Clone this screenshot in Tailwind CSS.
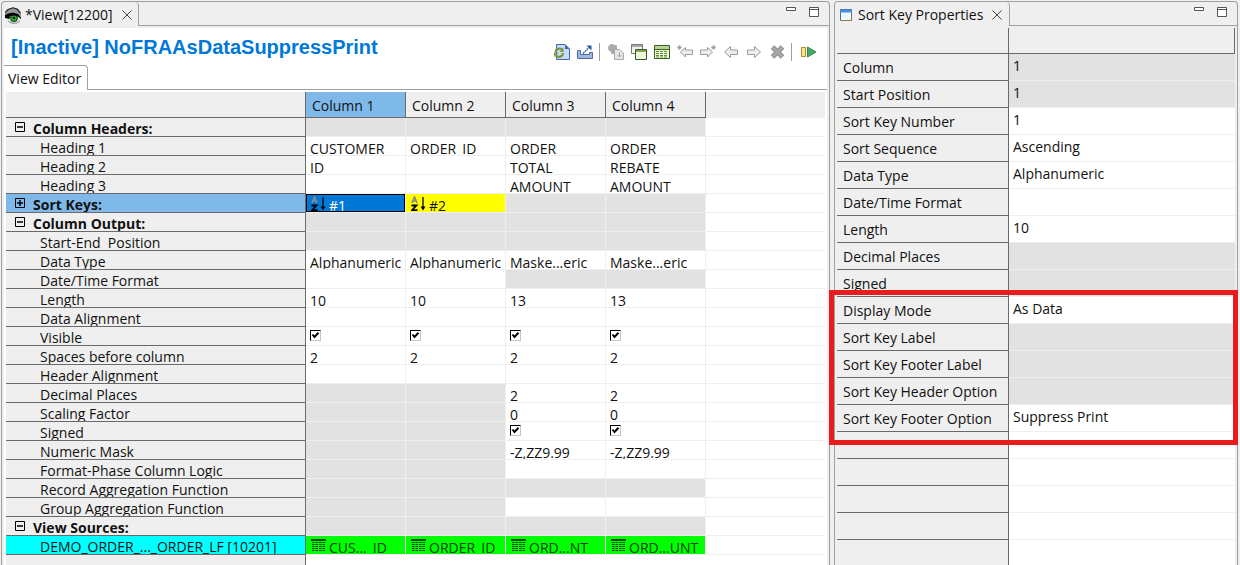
<!DOCTYPE html>
<html lang="en">
<head>
<meta charset="utf-8">
<title>View Editor</title>
<script src="https://cdn.jsdelivr.net/npm/@tailwindcss/browser@4"></script>
</head>
<body class="h-screen overflow-hidden bg-[#efefef] font-['Open_Sans','Noto_Sans',sans-serif] text-sm leading-5 text-[#111]">
<main class="flex h-full gap-1 pt-px pr-0.5 pl-px">

  <!-- View editor -->
  <section class="flex min-w-0 flex-1 flex-col overflow-hidden rounded-t border border-b-0 border-[#a0a0a0]">
    <header class="flex h-6 shrink-0">
      <div class="flex w-[137px] shrink-0 items-center rounded-tr border-r border-[#a0a0a0] pt-0.5 pl-[3px]">
        <svg class="h-[17px] w-4 shrink-0" viewBox="0 0 16 17" aria-hidden="true">
          <path d="M0 6 3 2.500 8 .5 13 2 16 6V10L12 7 7 5.500 3 7 0 10Z" fill="#9a9a9a"/>
          <path d="M0 5.500 3 2.500 8 .8 12 2 15.500 6" fill="none" stroke="#222" stroke-width="1.200"/>
          <path d="M0 8 4 6.500 8 6 13 7.500 16 10V13L12 16H6L3 13Z" fill="#e6e6e6"/>
          <circle cx="9" cy="11" r="3.900" fill="#0a4a0e"/><circle cx="9" cy="11.300" r="2.700" fill="#35b52d"/><circle cx="9" cy="11" r="1.300" fill="#012"/>
          <path d="M0 8 3 6.500 8 5.500 13 7 16 10.500V12L13 9.500 9 8.300 5 9 4.500 12 2 11.500 0 11Z" fill="#000"/>
          <path d="M3 14 7 16.300 12 16 15 14" fill="none" stroke="#888"/>
        </svg>
        <span class="ml-1 whitespace-nowrap">*View[12200]</span>
        <button class="ml-2 size-3 shrink-0" aria-label="Close view"><svg viewBox="0 0 12 12" fill="none" stroke="#444"><path d="M1.500 1.500 10.500 10.500M10.500 1.500 1.500 10.500"/></svg></button>
      </div>
      <div class="flex flex-1 items-start justify-end gap-[11px] border-b border-[#a0a0a0] pt-1 pr-[9px]">
        <button class="h-3 w-3" aria-label="Minimize"><svg viewBox="0 0 12 12" fill="#fff" stroke="#555"><path d="M1.500 1.500H10.500V4.500H1.500Z"/></svg></button>
        <button class="h-3 w-3" aria-label="Maximize"><svg viewBox="0 0 12 12" fill="#fff" stroke="#555"><path d="M1.500 1.500H10.500V10.500H1.500ZM1.500 3.500H10.500"/></svg></button>
      </div>
    </header>

    <div class="mt-0.5 mr-0.5 ml-0.5 flex min-h-0 flex-1 flex-col bg-white">
      <div class="flex h-[37px] shrink-0 justify-between pr-[10px] pl-[7px]">
        <h1 class="pt-[7px] font-['Liberation_Sans',sans-serif] text-[20px] leading-6 font-bold whitespace-nowrap text-[#0078d7]">[Inactive] NoFRAAsDataSuppressPrint</h1>
        <div class="flex gap-[7px] pt-4" role="toolbar" aria-label="View actions">
          <button class="size-4" aria-label="Refresh"><svg viewBox="0 0 16 16"><path d="M2.500.500H11L15.500 5V15.500H2.500Z" fill="#c9dcf5" stroke="#3f67b0"/><path d="M11 .500V5H15.500Z" fill="#3f67b0"/><path d="M1.500 8A4 4 0 0 1 8 5.500M9 9A4 4 0 0 1 2 11.500" fill="none" stroke="#7b9340" stroke-width="2.200"/><path d="M9.500 3.500V8H5.500ZM0 13V8.500H4.500Z" fill="#7b9340"/></svg></button>
          <button class="size-4" aria-label="Export"><svg viewBox="0 0 16 16"><path d="M.500 6.500H3.500V10.500H12.500V8.500H15.500V14.500H.500Z" fill="#9db7df" stroke="#4a6ca8"/><path d="M6 9.500 13 2.500" stroke="#205a96" stroke-width="1.300" stroke-dasharray="2 .7"/><path d="M9.500 1.500H14.500V6.500Z" fill="#205a96"/></svg></button>
          <span class="-mt-px mr-px -ml-px h-[18px] w-px bg-[#a0a0a0]"></span>
          <button class="size-4" aria-label="Copy"><svg viewBox="0 0 16 16" fill="#e4e4e4" stroke="#aaa"><circle cx="4" cy="4" r="3.500" fill="#aaa"/><path d="M3.500 1.500H8.500V9.500H3.500Z" fill="#aaa"/><path d="M6.500 5.500H11.500L15.500 9V15.500H6.500Z"/><path d="M11.500 8V13M9.500 11 11.500 13 13.500 11" fill="none"/></svg></button>
          <button class="size-4" aria-label="Windows"><svg viewBox="0 0 16 16"><path d="M.500.500H11.500V9.500H.500Z" fill="#f2f2f2" stroke="#777"/><path d="M1 2H11" stroke="#aaa" stroke-width="2"/><path d="M4.500 5.500H15.500V15.500H4.500Z" fill="#edf5da" stroke="#345b20"/><path d="M5 7H15" stroke="#80a850" stroke-width="2"/></svg></button>
          <button class="size-4" aria-label="Table"><svg viewBox="0 0 16 16"><path d="M.500 1.500H15.500V14.500H.500Z" fill="#f1fadd" stroke="#35651c"/><path d="M1 3.500H15" stroke="#b5d39a" stroke-width="3"/><path d="M.500 5.500H15.500" stroke="#35651c"/><path d="M2 7.500H14M2 9.500H14M2 11.500H14M2 13H14" stroke="#58902e" stroke-dasharray="3 1"/></svg></button>
          <button class="size-4" aria-label="Insert before"><svg viewBox="0 0 16 16" fill="#eee" stroke="#999"><path d="M3.500 8 8.500 3.500V6H15.500V10.500H8.500V13Z"/><path d="M2.500 1V6M0 3.500H5M.700 1.700 4.300 5.300M4.300 1.700.700 5.300" stroke-width=".8"/></svg></button>
          <button class="size-4" aria-label="Insert after"><svg viewBox="0 0 16 16" fill="#eee" stroke="#999"><path d="M12.500 8 7.500 3.500V6H.500V10.500H7.500V13Z"/><path d="M13.500 1V6M11 3.500H16M11.700 1.700 15.300 5.300M15.300 1.700 11.700 5.300" stroke-width=".8"/></svg></button>
          <button class="size-4" aria-label="Move left"><svg viewBox="0 0 16 16" fill="#eee" stroke="#999"><path d="M1.500 8 7.500 2.500V6H14.500V10.500H7.500V13.500Z"/></svg></button>
          <button class="size-4" aria-label="Move right"><svg viewBox="0 0 16 16" fill="#eee" stroke="#999"><path d="M14.500 8 8.500 2.500V6H1.500V10.500H8.500V13.500Z"/></svg></button>
          <button class="size-4" aria-label="Delete"><svg viewBox="0 0 16 16" fill="none"><path d="M3.500 3 13.500 13M13.500 3 3.500 13" stroke="#8f8f8f" stroke-width="5"/><path d="M3.500 3 13.500 13M13.500 3 3.500 13" stroke="#a8a8a8" stroke-width="3"/></svg></button>
          <span class="-mt-px mr-0.5 -ml-px h-[18px] w-px bg-[#a0a0a0]"></span>
          <button class="size-4" aria-label="Run"><svg viewBox="0 0 16 16"><path d="M.500 3.500H4.500V12.500H.500Z" fill="#fbe49a" stroke="#b68a20"/><path d="M6.500 3 15 8 6.500 13Z" fill="#46a868" stroke="#2f8a4c"/></svg></button>
        </div>
      </div>
      <div class="flex h-[25px] shrink-0">
        <button class="w-[84px] shrink-0 rounded-tr border-t border-r border-[#a0a0a0] pt-0.5 pl-1 text-left whitespace-nowrap">View Editor</button>
        <div class="flex-1 border-b border-[#a0a0a0]"></div>
      </div>

      <div class="mt-0.5 mr-0.5 ml-0.5 flex min-h-0 flex-1 flex-col overflow-hidden">
        <table class="w-full table-fixed border-separate border-spacing-0">
          <colgroup><col class="w-[300px]"><col class="w-[100px]"><col class="w-[100px]"><col class="w-[100px]"><col class="w-[100px]"><col></colgroup>
          <thead>
            <tr class="h-[26px] bg-[#efefef] text-left">
              <td class="border-r border-b border-[#6a6a6a] p-0"></td>
              <th scope="col" class="border-r border-b border-[#6a6a6a] bg-[#7fb9ea] p-0 pt-0.5 pl-1.5 font-normal">Column 1</th>
              <th scope="col" class="border-r border-b border-[#6a6a6a] p-0 pt-0.5 pl-1.5 font-normal">Column 2</th>
              <th scope="col" class="border-r border-b border-[#6a6a6a] p-0 pt-0.5 pl-1.5 font-normal">Column 3</th>
              <th scope="col" class="border-r border-b border-[#6a6a6a] p-0 pt-0.5 pl-1.5 font-normal">Column 4</th>
              <td class="p-0"></td>
            </tr>
          </thead>
          <tbody id="grid"></tbody>
        </table>
        <div class="w-[300px] flex-1 border-r border-[#6a6a6a] bg-[#efefef]"></div>
      </div>
    </div>
  </section>

  <!-- Sort key properties -->
  <section class="relative flex w-[404px] shrink-0 flex-col rounded-t border border-b-0 border-[#a0a0a0]">
    <header class="flex h-6 shrink-0">
      <div class="flex w-[175px] shrink-0 items-center rounded-tr border-r border-[#a0a0a0] pt-0.5 pl-[5px]">
        <svg class="size-3 shrink-0" viewBox="0 0 12 12" aria-hidden="true"><path d="M.500.500H11.500V11.500H.500Z" fill="#eef8ff" stroke="#8a7a4a"/><path d="M.500 11V.500H11.500V6" fill="none" stroke="#3a6ea5"/><path d="M0 2H12" stroke="#4a90d0" stroke-width="3"/></svg>
        <span class="ml-1.5 whitespace-nowrap">Sort Key Properties</span>
        <button class="ml-2 size-3 shrink-0" aria-label="Close properties"><svg viewBox="0 0 12 12" fill="none" stroke="#444"><path d="M1.500 1.500 10.500 10.500M10.500 1.500 1.500 10.500"/></svg></button>
      </div>
      <div class="flex flex-1 items-start justify-end gap-[11px] border-b border-[#a0a0a0] pt-1 pr-[9px]">
        <button class="h-3 w-3" aria-label="Minimize"><svg viewBox="0 0 12 12" fill="#fff" stroke="#555"><path d="M1.500 1.500H10.500V4.500H1.500Z"/></svg></button>
        <button class="h-3 w-3" aria-label="Maximize"><svg viewBox="0 0 12 12" fill="#fff" stroke="#555"><path d="M1.500 1.500H10.500V10.500H1.500ZM1.500 3.500H10.500"/></svg></button>
      </div>
    </header>
    <div class="mt-0.5 mr-0.5 ml-0.5 min-h-0 flex-1 overflow-hidden">
      <table class="w-full table-fixed border-separate border-spacing-0">
        <colgroup><col class="w-[172px]"><col></colgroup>
        <thead><tr class="h-[26px]"><td class="border-r border-b border-[#6a6a6a] p-0"></td><td class="border-r border-b border-[#6a6a6a] p-0"></td></tr></thead>
        <tbody id="props"></tbody>
      </table>
    </div>
    <div class="pointer-events-none absolute top-[288px] -right-px -left-1.5 h-[155px] border-5 border-[#e81c1c]"></div>
  </section>
</main>

<script>
  // Row: [kind, label, cell 1..4]; null marks a disabled cell.
  const N = null;
  const rows = [
    ['open', 'Column Headers:', N, N, N, N],
    ['item', 'Heading 1', 'CUSTOMER', 'ORDER_ID', 'ORDER', 'ORDER'],
    ['item', 'Heading 2', 'ID', '', 'TOTAL', 'REBATE'],
    ['item', 'Heading 3', '', '', 'AMOUNT', 'AMOUNT'],
    ['shut', 'Sort Keys:', 'sort:#1', 'sort:#2', N, N],
    ['open', 'Column Output:', N, N, N, N],
    ['item', 'Start-End  Position', N, N, N, N],
    ['item', 'Data Type', 'Alphanumeric', 'Alphanumeric', 'Maske...eric', 'Maske...eric'],
    ['item', 'Date/Time Format', '', '', N, N],
    ['item', 'Length', '10', '10', '13', '13'],
    ['item', 'Data Alignment', '', '', '', ''],
    ['item', 'Visible', 'check', 'check', 'check', 'check'],
    ['item', 'Spaces before column', '2', '2', '2', '2'],
    ['item', 'Header Alignment', '', '', '', ''],
    ['item', 'Decimal Places', N, N, '2', '2'],
    ['item', 'Scaling Factor', N, N, '0', '0'],
    ['item', 'Signed', N, N, 'check', 'check'],
    ['item', 'Numeric Mask', N, N, '-Z,ZZ9.99', '-Z,ZZ9.99'],
    ['item', 'Format-Phase Column Logic', N, N, '', ''],
    ['item', 'Record Aggregation Function', N, N, N, N],
    ['item', 'Group Aggregation Function', N, N, '', ''],
    ['open', 'View Sources:', N, N, N, N],
    ['source', 'DEMO_ORDER_..._ORDER_LF [10201]', 'src:CUS..._ID', 'src:ORDER_ID', 'src:ORD...NT', 'src:ORD...UNT'],
  ];
  const sortIcon = '<svg class="ml-px mt-0.5 h-4 w-[15px] shrink-0" viewBox="0 0 15 16" fill="none" aria-hidden="true"><path d="M1 7 3.500 1 6 7M2 5H5" stroke="#8a8a8a" stroke-width="1.700"/><path d="M.500 9.500H5.500L1 14.200H6.500" stroke="#000" stroke-width="1.800"/><path d="M12 1V13" stroke="#000" stroke-width="1.300"/><path d="M9.500 10.500H14.500L12 14.500Z" fill="#000"/></svg>';
  const tableIcon = '<svg class="ml-px mt-[3px] h-3 w-[15px] shrink-0" viewBox="0 0 15 12" stroke="#043804" aria-hidden="true"><path d="M0 1H15" stroke="#000" stroke-width="1.500"/><path d="M1 3.500H14M1 5.500H14M1 7.500H14M1 9.500H14M1 11.500H14" stroke-dasharray="2.500 1"/></svg>';
  const check = (row, col) => '<span class="mt-[3px] grid size-[11px]"><input type="checkbox" checked aria-label="' + row + ', column ' + col + '" class="col-start-1 row-start-1 size-[11px] appearance-none border border-t-black border-l-black border-r-[#c8c8b8] border-b-[#c8c8b8] bg-white"><svg class="pointer-events-none col-start-1 row-start-1 size-[11px]" viewBox="0 0 11 11" fill="none" stroke="#000" stroke-width="2"><path d="M2.500 4.500 4.500 7 8.500 2.800"/></svg></span>';
  const cell = (v, row, col) => {
    let bg = 'bg-white', body = '';
    if (v === null) bg = 'bg-[#e2e2e2]';
    else if (v === 'check') body = check(row, col);
    else if (v.startsWith('sort:')) {
      bg = col === 1 ? 'bg-[#0078d7] text-white outline outline-black -outline-offset-1' : 'bg-[#ffff00]';
      body = sortIcon + '<span class="ml-[3px] mt-0.5">' + v.slice(5) + '</span>';
    } else if (v.startsWith('src:')) {
      bg = 'bg-[#00ff00] text-[#043804]';
      body = tableIcon + '<span class="ml-[3px] mt-0.5">' + v.slice(4) + '</span>';
    } else body = '<span class="mt-0.5">' + v + '</span>';
    return '<td class="border-r border-b border-[#efefef] p-0"><div class="flex h-[18px] items-start overflow-hidden pl-1 whitespace-nowrap ' + bg + '">' + body + '</div></td>';
  };
  document.getElementById('grid').innerHTML = rows.map(([kind, label, ...cells]) => {
    const bg = kind === 'shut' ? 'bg-[#7fb9ea]' : kind === 'source' ? 'bg-[#00ffff]' : 'bg-[#efefef]';
    const group = kind === 'open' || kind === 'shut';
    const head = group
      ? '<button class="flex items-start pl-[9px] font-bold" aria-expanded="' + (kind === 'open') + '"><svg class="mt-1 size-[10px]" viewBox="0 0 10 10" fill="none" stroke="#000"><path d="M.500.500H9.500V9.500H.500Z"/><path stroke-width="1.500" d="' + (kind === 'open' ? 'M2 5H8' : 'M2 5H8M5 2V8') + '"/></svg><span class="mt-px ml-2">' + label + '</span></button>'
      : '<span class="mt-px pl-[34px]">' + label + '</span>';
    return '<tr><th scope="row" class="border-r border-b border-[#6a6a6a] p-0 text-left font-normal ' + bg + '"><div class="flex h-[18px] items-start overflow-hidden whitespace-pre">' + head + '</div></th>' +
      cells.map((v, i) => cell(v, label, i + 1)).join('') + '<td class="border-b border-[#efefef] p-0"></td></tr>';
  }).join('');

  const props = [
    ['Column', '1', 0], ['Start Position', '1', 0], ['Sort Key Number', '1', 1], ['Sort Sequence', 'Ascending', 1],
    ['Data Type', 'Alphanumeric', 1], ['Date/Time Format', '', 1], ['Length', '10', 1], ['Decimal Places', '', 0],
    ['Signed', '', 0], ['Display Mode', 'As Data', 1], ['Sort Key Label', '', 0], ['Sort Key Footer Label', '', 0],
    ['Sort Key Header Option', '', 0], ['Sort Key Footer Option', 'Suppress Print', 1],
    ['', '', 1], ['', '', 1], ['', '', 1], ['', '', 1], ['', '', 1],
  ];
  document.getElementById('props').innerHTML = props.map(([k, v, on]) =>
    '<tr><th scope="row" class="border-r border-b border-[#6a6a6a] p-0 text-left font-normal"><div class="h-[26px] overflow-hidden pt-1 pl-1.5 whitespace-nowrap">' + k + '</div></th>' +
    '<td class="border-b border-[#efefef] p-0 ' + (on ? 'bg-white' : 'bg-[#e2e2e2]') + '"><div class="h-[26px] pt-0.5 pl-1">' + v + '</div></td></tr>').join('');
</script>
</body>
</html>
